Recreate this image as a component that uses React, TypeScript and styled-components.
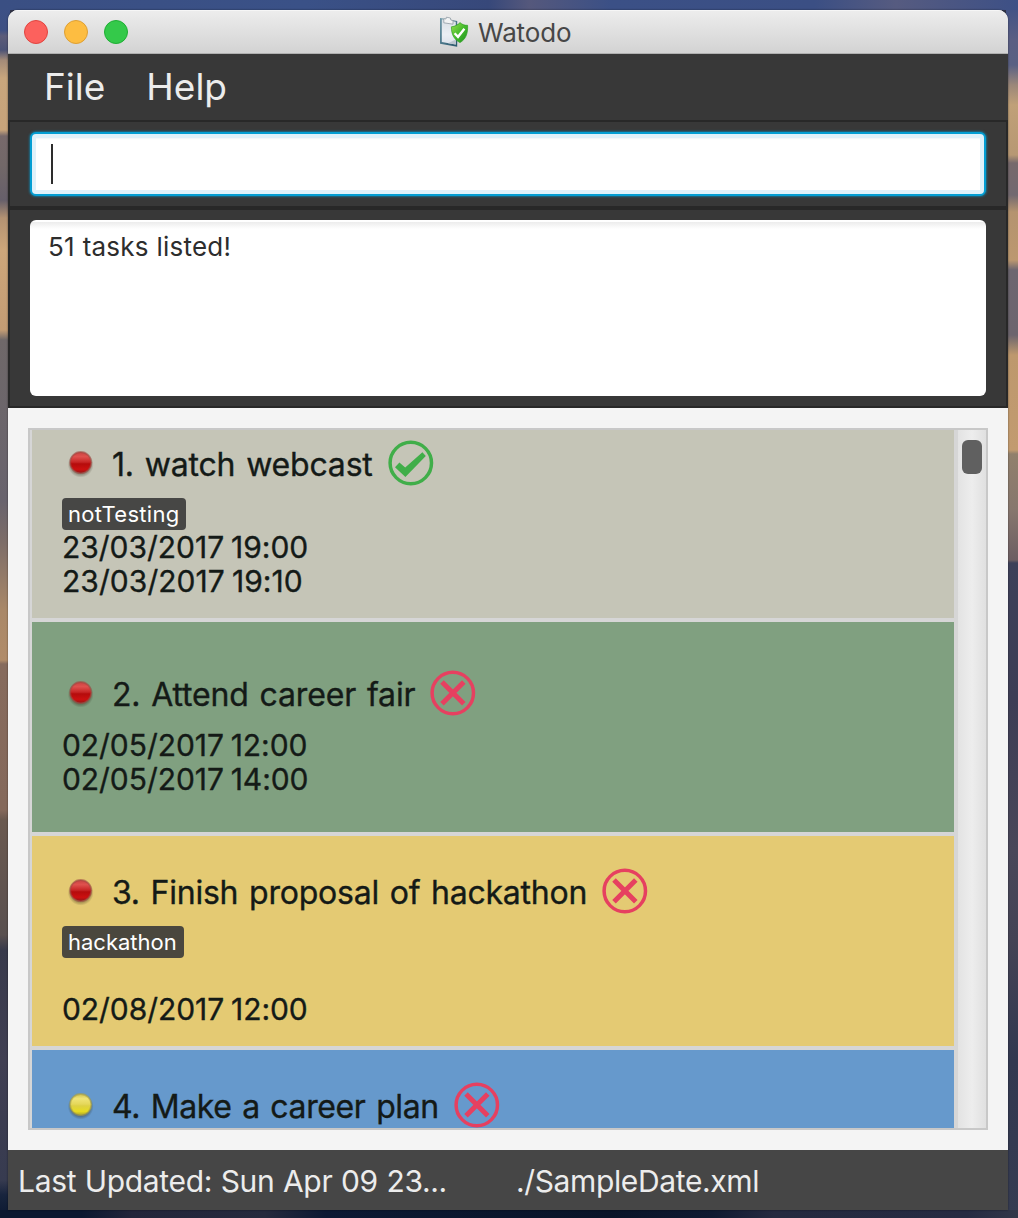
import React from "react";
import styled, { createGlobalStyle } from "styled-components";

const GlobalStyle = createGlobalStyle`
  *, *::before, *::after { box-sizing: border-box; }
  html, body { margin: 0; padding: 0; }
  body { font-family: Inter, "Liberation Sans", sans-serif; overflow: hidden; }
`;

const Desktop = styled.div`
  width: 1018px;
  height: 1218px;
  padding: 10px 10px 8px 8px;
  background:
    linear-gradient(90deg, #3a4f83, #3a5187 30%, #37487a 48%, #55587c 52%, #3b5086 60%, #3b4f84 80%, #565b80 88%, #3d5086) 0 0 / 100% 10px no-repeat,
    linear-gradient(90deg, #0b1830, #0b1830 8%, #22253a 13%, #262a3d 26%, #0c1933 32%, #091428 60%, #0f1a31 70%, #252a3f 76%, #262b42 95%, #333749) 0 100% / 100% 8px no-repeat,
    linear-gradient(180deg, #3d5187 0, #3e5083 30px, #5c5c79 36px, #4c5376 50px, #a28a78 60px, #c8a67d 78px, #c7a37a 130px, #77696b 136px, #726868 165px, #665f6a 200px, #b39272 218px, #cda67a 250px, #c39c74 330px, #6f6869 340px, #68636d 500px, #7b6c68 540px, #a98868 610px, #b18c69 660px, #866b5d 664px, #85695b 810px, #6a594f 820px, #59504f 935px, #383a4b 950px, #403f52 1060px, #373b50 1180px, #18243d 1195px, #0b1830) 0 0 / 10px 100% no-repeat,
    linear-gradient(180deg, #3d5086 0, #5a5e83 40px, #596083 65px, #9b8779 85px, #c0a078 105px, #b79874 155px, #77696c 163px, #726970 195px, #b4936f 212px, #bc9870 260px, #6c6670 270px, #6c656e 335px, #bd986d 355px, #c29b70 450px, #91806c 454px, #87776e 510px, #6d5e62 560px, #3d4059 563px, #3d3d55 700px, #494759 850px, #444355 940px, #323850 1060px, #363c52 1218px) 100% 0 / 12px 100% no-repeat,
    #303448;
`;

const Window = styled.div`
  display: flex;
  flex-direction: column;
  width: 1000px;
  height: 1200px;
  border-radius: 10px 10px 0 0;
  overflow: hidden;
  background: #f4f4f4;
  box-shadow: 0 0 2px rgba(0, 0, 0, 0.55);
`;

const TitleBar = styled.header`
  display: grid;
  grid-template-columns: 120px 1fr 120px;
  align-items: center;
  flex: none;
  height: 44px;
  padding-left: 16px;
  background: linear-gradient(#ededed, #d3d3d3);
  border-bottom: 1px solid #b0b0b0;
  box-shadow: inset 0 1px 0 #f6f6f6;
`;

const Lights = styled.div`
  display: flex;
  gap: 16px;
`;

const Light = styled.span<{ $fill: string; $edge: string }>`
  width: 24px;
  height: 24px;
  border-radius: 50%;
  background: ${(p) => p.$fill};
  border: 1px solid ${(p) => p.$edge};
`;

const Title = styled.div`
  display: flex;
  align-items: center;
  padding-left: 295px;
  gap: 9px;
  font-size: 26px;
  line-height: 40px;
  letter-spacing: -0.15px;
  color: #474747;
`;

const TitleText = styled.span`
  padding-top: 2px;
`;

const MenuBar = styled.nav`
  display: flex;
  flex: none;
  height: 66px;
  padding-left: 36px;
  gap: 41px;
  background: #383838;
`;

const MenuItem = styled.span`
  font-size: 37px;
  line-height: 66px;
  color: #ececec;
`;

const Pane = styled.section<{ $height: number }>`
  flex: none;
  height: ${(p) => p.$height}px;
  padding: 10px 20px;
  background: #383838;
  border: 2px solid #282828;
`;

const CommandField = styled.div`
  display: flex;
  align-items: center;
  height: 64px;
  padding-left: 19px;
  background: #fff;
  border: 2px solid #039ed3;
  border-radius: 6px;
  box-shadow: 0 0 2px 1px rgba(3, 158, 211, 0.5), inset 0 0 0 4px #dff1fa, inset 0 6px 2px -1px #f1f5f7;
`;

const Caret = styled.span`
  width: 2px;
  height: 40px;
  background: #2d2d2d;
`;

const ResultBox = styled.div`
  height: 176px;
  padding: 8px 18px;
  background: linear-gradient(#fff 2px, #ececec 2px, #fff 9px);
  border-radius: 6px;
  font-size: 26px;
  line-height: 38px;
  letter-spacing: 0.22px;
  word-spacing: 0.3px;
  color: #2d2d2d;
`;

const Content = styled.main`
  flex: 1;
  padding: 20px;
`;

const ListView = styled.div`
  display: flex;
  height: 702px;
  padding-left: 2px;
  border: 2px solid #c8c8c8;
  background: #d6d6d6;
`;

const Cells = styled.div`
  display: flex;
  flex-direction: column;
  width: 922px;
  gap: 4px;
  overflow: hidden;
`;

const Cell = styled.article<{ $bg: string; $height: number; $top: number }>`
  flex: none;
  height: ${(p) => p.$height}px;
  padding: ${(p) => p.$top}px 30px 0;
  background: ${(p) => p.$bg};
`;

const Heading = styled.div`
  display: flex;
  align-items: center;
  height: 46px;
  margin-bottom: 12px;
`;

const Name = styled.span<{ $spacing: number; $width: number }>`
  width: ${(p) => p.$width}px;
  margin-left: 16px;
  padding-top: 4px;
  font-size: 32px;
  line-height: 46px;
  letter-spacing: ${(p) => p.$spacing}px;
  word-spacing: 2px;
  white-space: nowrap;
  color: #141a17;
  -webkit-text-stroke: 0.35px #141a17;
`;

const TagRow = styled.div`
  display: flex;
`;

const Tag = styled.span<{ $width: number; $spacing: number }>`
  width: ${(p) => p.$width}px;
  height: 32px;
  padding-left: 6px;
  border-radius: 4px;
  background: rgba(56, 56, 56, 0.9);
  font-size: 22px;
  line-height: 32px;
  letter-spacing: ${(p) => p.$spacing}px;
  white-space: nowrap;
  color: #fff;
`;

const DateLine = styled.div<{ $spacing: number }>`
  height: 34px;
  font-size: 30px;
  line-height: 34px;
  letter-spacing: ${(p) => p.$spacing}px;
  word-spacing: -1.5px;
  white-space: nowrap;
  color: #141a17;
  -webkit-text-stroke: 0.35px #141a17;
`;

const ScrollTrack = styled.div`
  width: 28px;
  margin-left: 4px;
  padding: 10px 4px;
  background: linear-gradient(90deg, #e3e3e3, #ededed 50%, #e0e0e0);
`;

const ScrollThumb = styled.div`
  width: 20px;
  height: 34px;
  border-radius: 6px;
  background: #606060;
`;

const StatusBar = styled.footer`
  display: grid;
  grid-template-columns: 498px 1fr;
  flex: none;
  height: 60px;
  padding-left: 10px;
  background: #464646;
`;

const StatusText = styled.span<{ $spacing: number }>`
  font-size: 30px;
  line-height: 63px;
  letter-spacing: ${(p) => p.$spacing}px;
  word-spacing: 0.5px;
  white-space: nowrap;
  color: #ececec;
`;

const AppIcon = () => (
  <svg width="30" height="32" viewBox="0 0 30 32">
    <defs>
      <linearGradient id="board" x1="0" y1="0" x2="1" y2="1">
        <stop offset="0" stopColor="#6f98a8" />
        <stop offset="1" stopColor="#28566b" />
      </linearGradient>
      <linearGradient id="paper" x1="0" y1="0" x2="0" y2="1">
        <stop offset="0" stopColor="#d9dfe5" />
        <stop offset="0.6" stopColor="#ebeff4" />
        <stop offset="1" stopColor="#dde2ea" />
      </linearGradient>
      <linearGradient id="shield" x1="0" y1="0" x2="1" y2="1">
        <stop offset="0" stopColor="#9be04f" />
        <stop offset="0.5" stopColor="#45bb2c" />
        <stop offset="1" stopColor="#1f9220" />
      </linearGradient>
    </defs>
    <path d="M1 2 L18.2 5 V30.8 L1 27.8Z" fill="url(#board)" />
    <path d="M2.8 3.2 L16.8 5.8 V28.6 L2.8 26Z" fill="url(#paper)" />
    <path d="M9 27.2 L16.8 23.6 V28.6Z" fill="#bcc6d0" />
    <path d="M4.8 2.6 L7 3 L7.4 1.2 L11.4 2 L11.8 3.9 L14 4.6 V8.2 L4.8 6.8Z" fill="#f2f3f4" stroke="#919ca4" strokeWidth=".8" />
    <path d="M21 6.6 C23.4 8.8 25.8 9.5 28.6 9.3 C28.9 17.2 27.2 23 21 26.6 C14.8 23.4 12.4 18.2 12.4 10.8 C16.2 10.4 18.8 9 21 6.6Z" fill="url(#shield)" stroke="#2c9d24" strokeWidth=".7" />
    <path d="M15.6 17.2 L19 20.8 L25.4 12.7" fill="none" stroke="#fff" strokeWidth="2.4" />
  </svg>
);

const Gem = ({ kind }: { kind: "red" | "yellow" }) => {
  const red = kind === "red";
  const id = "gem-" + kind;
  return (
    <svg width="34" height="34" viewBox="0 0 34 34">
      <defs>
        <linearGradient id={id} x1="0" y1="0" x2="0" y2="1">
          <stop offset="0" stopColor={red ? "#c94442" : "#cfc255"} />
          <stop offset=".22" stopColor={red ? "#df514e" : "#efe477"} />
          <stop offset=".48" stopColor={red ? "#c72525" : "#e5d75a"} />
          <stop offset=".56" stopColor={red ? "#b50c0c" : "#ddd044"} />
          <stop offset=".82" stopColor={red ? "#cc1010" : "#e7dc20"} />
          <stop offset="1" stopColor={red ? "#8f1919" : "#a9a32b"} />
        </linearGradient>
        <radialGradient id={id + "-shade"}>
          <stop offset=".68" stopColor="#2a2210" stopOpacity=".42" />
          <stop offset="1" stopColor="#2a2210" stopOpacity="0" />
        </radialGradient>
      </defs>
      <circle cx="18.7" cy="18.6" r="13" fill={`url(#${id}-shade)`} />
      <circle cx="18.7" cy="16.6" r="10.6" fill={`url(#${id})`} stroke={red ? "#a04a42" : "#a9a046"} strokeOpacity=".6" strokeWidth="1.8" />
    </svg>
  );
};

const StatusIcon = ({ done }: { done: boolean }) => (
  <svg width="46" height="46" viewBox="0 0 46 46">
    <circle cx="22.8" cy="23" r="20.7" fill="none" stroke={done ? "#40ae49" : "#e64060"} strokeWidth="3.5" />
    {done ? (
      <path d="M7 27.2 L11.4 22.4 L17.2 27.6 L34.4 12.2 L37.8 16 L17.4 37Z" fill="#40ae49" />
    ) : (
      <path d="M12 12 L33.8 33.8 M33.8 12 L12 33.8" fill="none" stroke="#e64060" strokeWidth="5" />
    )}
  </svg>
);

type Task = {
  name: string;
  nameWidth: number;
  nameSpacing: number;
  gem: "red" | "yellow";
  done?: boolean;
  tag?: { text: string; width: number; spacing: number };
  dates: { text: string; spacing: number }[];
  bg: string;
  height: number;
  top: number;
};

const tasks: Task[] = [
  {
    name: "1. watch webcast", nameWidth: 276, nameSpacing: -0.18, gem: "red", done: true,
    tag: { text: "notTesting", width: 124, spacing: 0.3 },
    dates: [{ text: "23/03/2017 19:00", spacing: -0.02 }, { text: "23/03/2017 19:10", spacing: 0.06 }],
    bg: "#c5c5b7", height: 188, top: 10,
  },
  {
    name: "2. Attend career fair", nameWidth: 318, nameSpacing: -0.16, gem: "red",
    dates: [{ text: "02/05/2017 12:00", spacing: -0.06 }, { text: "02/05/2017 14:00", spacing: -0.06 }],
    bg: "#80a080", height: 210, top: 48,
  },
  {
    name: "3. Finish proposal of hackathon", nameWidth: 490, nameSpacing: -0.23, gem: "red",
    tag: { text: "hackathon", width: 122, spacing: 0 },
    dates: [{ text: "", spacing: 0 }, { text: "02/08/2017 12:00", spacing: -0.06 }],
    bg: "#e4ca73", height: 210, top: 32,
  },
  {
    name: "4. Make a career plan", nameWidth: 342, nameSpacing: -0.38, gem: "yellow",
    dates: [], bg: "#6699cc", height: 210, top: 32,
  },
];

const TaskCell = ({ task }: { task: Task }) => (
  <Cell $bg={task.bg} $height={task.height} $top={task.top}>
    <Heading>
      <Gem kind={task.gem} />
      <Name $spacing={task.nameSpacing} $width={task.nameWidth}>{task.name}</Name>
      <StatusIcon done={!!task.done} />
    </Heading>
    {task.tag && (
      <TagRow>
        <Tag $width={task.tag.width} $spacing={task.tag.spacing}>{task.tag.text}</Tag>
      </TagRow>
    )}
    {task.dates.map((d, i) => (
      <DateLine key={i} $spacing={d.spacing}>{d.text}</DateLine>
    ))}
  </Cell>
);

export default function App() {
  return (
    <>
      <GlobalStyle />
      <Desktop>
        <Window>
          <TitleBar>
            <Lights>
              <Light $fill="#fc615d" $edge="#e0443f" />
              <Light $fill="#fdbd41" $edge="#dd9f34" />
              <Light $fill="#34c94a" $edge="#1fae34" />
            </Lights>
            <Title>
              <AppIcon />
              <TitleText>Watodo</TitleText>
            </Title>
          </TitleBar>
          <MenuBar>
            <MenuItem>File</MenuItem>
            <MenuItem>Help</MenuItem>
          </MenuBar>
          <Pane $height={88}>
            <CommandField>
              <Caret />
            </CommandField>
          </Pane>
          <Pane $height={200}>
            <ResultBox>51 tasks listed!</ResultBox>
          </Pane>
          <Content>
            <ListView>
              <Cells>
                {tasks.map((t) => (
                  <TaskCell key={t.name} task={t} />
                ))}
              </Cells>
              <ScrollTrack>
                <ScrollThumb />
              </ScrollTrack>
            </ListView>
          </Content>
          <StatusBar>
            <StatusText $spacing={-0.33}>Last Updated: Sun Apr 09 23...</StatusText>
            <StatusText $spacing={-0.37}>./SampleDate.xml</StatusText>
          </StatusBar>
        </Window>
      </Desktop>
    </>
  );
}
